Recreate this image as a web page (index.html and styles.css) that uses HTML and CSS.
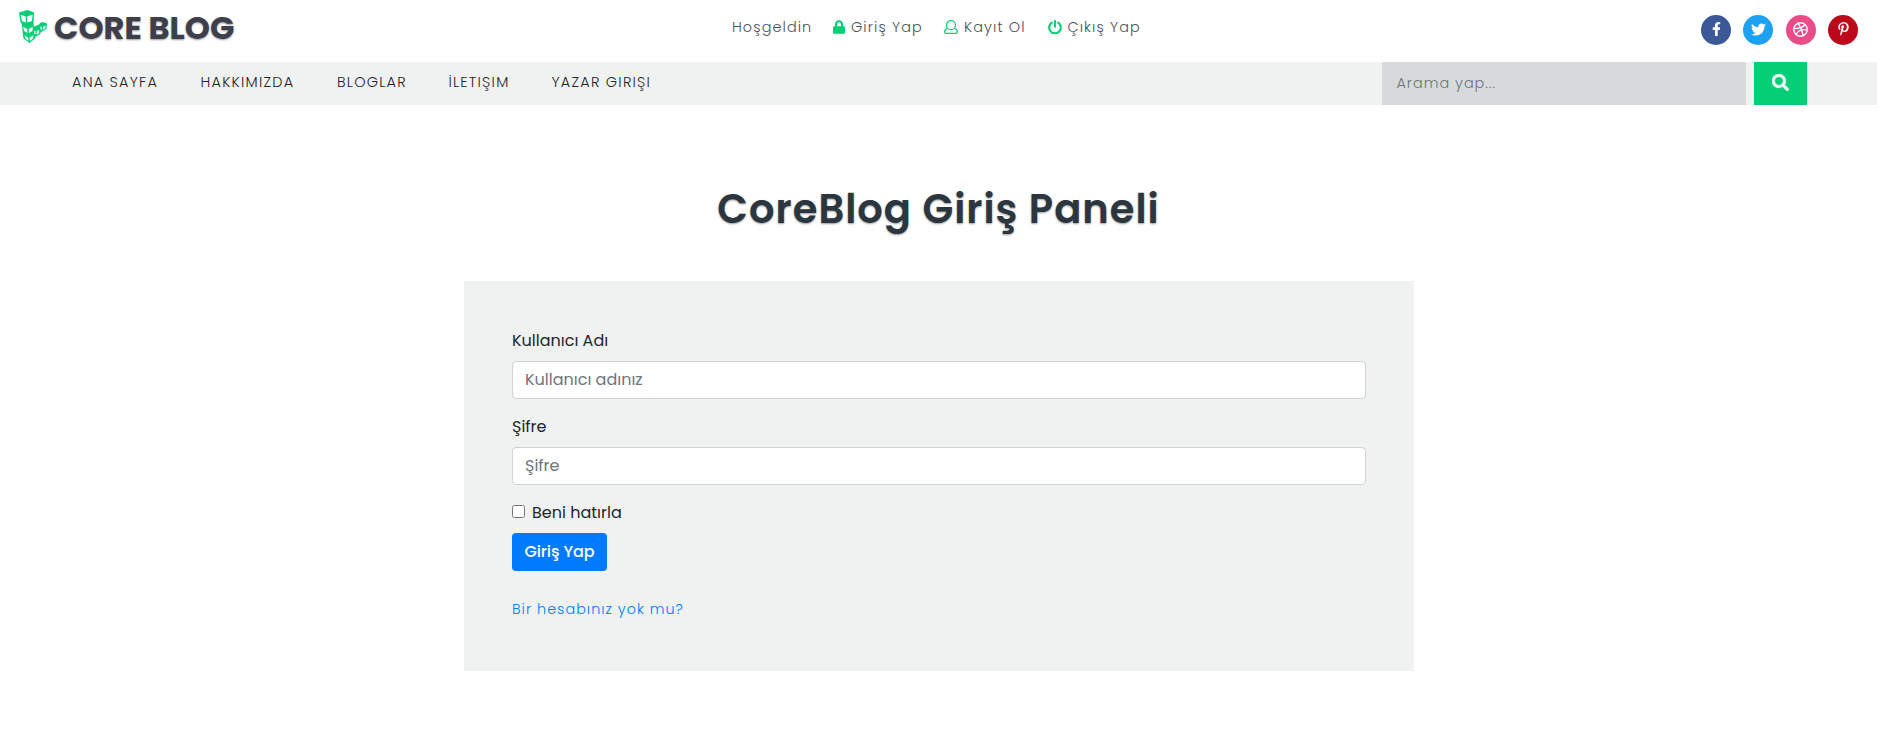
FILE: index.html
```html
<!DOCTYPE html>
<html lang="tr">
<head>
<meta charset="utf-8">
<title>CoreBlog Giriş Paneli</title>
<link rel="stylesheet" href="styles.css">
</head>
<body>
<header class="topbar">
  <a class="brand">
    <svg class="brand-mark" width="29" height="34" viewBox="0 0 29 34">
      <path fill="#04ce76" d="M0 2.500 8.500 0 15 2.500 14.500 12.500 15 17 16.500 16 20 14.500 21 13 24 12 28 13.500 27.500 19 22 22 21 24 16.500 27 15.500 29 10.500 33 4.500 28.500 3.500 21 3 14 1.500 12.500Z"/>
      <path fill="#fff" d="M1.600 4.800 6.700 6.400 7 12.500 3 11.200ZM8 6.400 13.600 4.600 13 11 8.300 12.500ZM4.200 17 8.200 19 8.500 23 5 21ZM9.700 19 13.700 17 13.500 21 9.900 23ZM5.500 25.500 9 27.500 9.600 31 6.200 28.200ZM10.500 27.500 14.500 25.200 14 28.500 11 31ZM15.400 20.500 16.700 21.300 16.500 24.500 15.300 24ZM17.900 21.300 20.300 20 19.800 23.300 17.600 24.700ZM21.500 16.300 22.900 17 22.700 20 21.500 19.500ZM24 17 26.700 15.600 26.200 18.500 23.900 19.700Z"/>
    </svg>
    <span class="brand-name">CORE BLOG</span>
  </a>
  <ul class="account">
    <li class="hello">Hoşgeldin</li>
    <li class="login"><svg width="12" height="14" viewBox="0 0 448 512"><path fill="currentColor" d="M400 224h-24v-72C376 68 308 0 224 0S72 68 72 152v72H48c-26 0-48 22-48 48v192c0 26 22 48 48 48h352c26 0 48-22 48-48V272c0-26-22-48-48-48zm-104 0H152v-72c0-40 32-72 72-72s72 32 72 72z"/></svg><span>Giriş Yap</span></li>
    <li class="register"><svg width="14" height="14" viewBox="0 0 14 14" fill="none" stroke="currentColor" stroke-width="1.200"><circle cx="7" cy="5.200" r="4.500"/><path d="M3.600 8.300C1.500 9 .6 10.200.6 11.900c0 .9.500 1.500 1.300 1.500h10.200c.8 0 1.300-.6 1.300-1.500 0-1.700-.9-2.900-3-3.600"/></svg><span>Kayıt Ol</span></li>
    <li class="logout"><svg width="14" height="14" viewBox="0 0 14 14" fill="none" stroke="currentColor" stroke-width="2.100" stroke-linecap="round"><path d="M3.800 2.700a5.800 5.800 0 1 0 6.400 0M7 1.100v5.600"/></svg><span>Çıkış Yap</span></li>
  </ul>
  <div class="social">
    <a class="facebook"><svg width="9" height="14" viewBox="0 0 320 512"><path fill="currentColor" d="M279 288l14-93h-89v-60c0-25 12-50 52-50h41V7s-37-7-72-7c-73 0-121 44-121 125v70H23v93h81v224h100V288z"/></svg></a>
    <a class="twitter"><svg width="15" height="15" viewBox="0 0 512 512"><path fill="currentColor" d="M459 152c.3 4.500.3 9 .3 13.600 0 138.700-105.600 298.600-298.600 298.600-59.500 0-114.700-17.200-161.100-47.100 8.400 1 16.600 1.300 25.300 1.300 49 0 94.200-16.600 130.300-44.800-46.100-1-84.800-31.200-98.100-72.800 6.500 1 13 1.600 19.800 1.600 9.400 0 18.800-1.300 27.600-3.600-48-9.700-84.100-52-84.100-103v-1.300c14 7.800 30.200 12.700 47.400 13.300-28.300-18.800-46.800-51-46.800-87.400 0-19.500 5.200-37.400 14.300-53 51.700 63.700 129.300 105.300 216.400 109.800-1.600-7.800-2.600-15.900-2.600-24 0-57.800 46.800-104.900 104.900-104.900 30.200 0 57.500 12.700 76.700 33.100 23.700-4.500 46.500-13.300 66.600-25.300-7.800 24.400-24.400 44.800-46.100 57.800 21.100-2.300 41.600-8.100 60.400-16.200-14.300 20.800-32.200 39.300-52.600 54.300z"/></svg></a>
    <a class="dribbble"><svg width="15" height="15" viewBox="0 0 14 14" fill="none" stroke="currentColor" stroke-width="1.250"><circle cx="7" cy="7" r="6.300"/><path d="M4.500 1.200C7 4.200 8.700 8 9.400 12.800M.8 6.200c4.500 0 8-.7 10.500-3.600M2.800 11.700C4.700 8.200 8.500 6.500 13.200 7.500"/></svg></a>
    <a class="pinterest"><svg width="11" height="14" viewBox="0 0 384 512"><path fill="currentColor" d="M204 6.500C101.400 6.500 0 74.900 0 185.600 0 256 39.600 296 63.600 296c9.900 0 15.600-27.600 15.600-35.400 0-9.300-23.700-29.100-23.700-67.800 0-80.400 61.200-137.400 140.400-137.400 68.100 0 118.500 38.700 118.500 109.800 0 53.100-21.300 152.700-90.300 152.700-24.900 0-46.200-18-46.200-43.800 0-37.800 26.400-74.400 26.400-113.400 0-66.200-93.900-54.200-93.900 25.800 0 16.800 2.100 35.400 9.600 50.700-13.800 59.400-42 147.900-42 209.100 0 18.900 2.700 37.500 4.500 56.400 3.400 3.800 1.700 3.400 6.900 1.500 50.400-69 48.600-82.500 71.400-172.800 12.300 23.400 44.100 36 69.300 36 106.200 0 153.900-103.500 153.900-196.800C384 71.300 298.200 6.500 204 6.500z"/></svg></a>
  </div>
</header>
<nav class="navbar">
  <div class="menu">
    <a class="m-home">ANA SAYFA</a><a class="m-about">HAKKIMIZDA</a><a class="m-blogs">BLOGLAR</a><a class="m-contact">İLETIŞIM</a><a class="m-author">YAZAR GIRIŞI</a>
  </div>
  <form class="search">
    <input type="search" placeholder="Arama yap...">
    <button type="button"><svg width="17" height="17" viewBox="0 0 512 512"><path fill="currentColor" stroke="currentColor" stroke-width="14" d="M505 442.700L405.300 343c-4.500-4.500-10.600-7-17-7H372c27.600-35.300 44-79.700 44-128C416 93.100 322.900 0 208 0S0 93.100 0 208s93.100 208 208 208c48.300 0 92.700-16.400 128-44v16.300c0 6.400 2.500 12.500 7 17l99.700 99.700c9.400 9.400 24.600 9.400 33.900 0l28.300-28.300c9.400-9.400 9.400-24.600.1-34zM208 336c-70.700 0-128-57.200-128-128 0-70.700 57.200-128 128-128 70.700 0 128 57.200 128 128 0 70.700-57.200 128-128 128z"/></svg></button>
  </form>
</nav>
<main>
  <h1>CoreBlog Giriş Paneli</h1>
  <form class="card">
    <label class="field-label name-label">Kullanıcı Adı</label>
    <input class="field name-field" type="text" placeholder="Kullanıcı adınız">
    <label class="field-label pass-label">Şifre</label>
    <input class="field pass-field" type="password" placeholder="Şifre">
    <label class="remember"><input type="checkbox"><span>Beni hatırla</span></label>
    <button class="submit" type="button">Giriş Yap</button>
    <a class="signup">Bir hesabınız yok mu?</a>
  </form>
</main>
</body>
</html>
```
FILE: styles.css
```css
* { box-sizing: border-box; }
body { margin: 0; background: #fff; font-family: Poppins, Inter, sans-serif; color: #212529; font-size: 16px; }
svg { display: block; flex: none; }
input, button { font-family: inherit; margin: 0; }

.topbar { display: flex; align-items: flex-start; justify-content: space-between; height: 62px; padding: 0 19px; }
.brand { display: flex; width: 713px; padding-top: 10px; gap: 6px; }
.brand-name { font-size: 32px; line-height: 36px; font-weight: 700; color: #3e3f4a; text-shadow: 0 1px 2px rgba(0,0,0,.4); white-space: nowrap; }
.account { display: flex; flex: 1; margin: 0; padding: 16px 0 0; list-style: none; font-size: 14.4px; line-height: 22px; font-weight: 300; color: #4a5157; white-space: nowrap; letter-spacing: 1.100px; }
.account li { display: flex; align-items: center; gap: 6px; }
.account svg { color: #04ce76; }
.hello { width: 101px; }
.login { width: 111px; }
.register { width: 103.500px; }
.social { display: flex; gap: 12.300px; padding-top: 15px; }
.social a { display: flex; align-items: center; justify-content: center; width: 30px; height: 30px; padding-bottom: 2px; border-radius: 50%; color: #fff; }
.facebook { background: #3b5998; }
.twitter { background: #1da1f2; }
.dribbble { background: #ea4c89; }
.pinterest { background: #bd081c; }

.navbar { display: flex; justify-content: space-between; height: 43px; padding: 0 70px 0 72px; background: #f0f2f1; }
.menu { display: flex; font-size: 14.4px; line-height: 40px; font-weight: 300; color: #212529; letter-spacing: 1.250px; white-space: nowrap; }
.m-home { width: 128.500px; }
.m-about { width: 136.500px; }
.m-blogs { width: 111.500px; }
.m-contact { width: 103px; }
.search { display: flex; gap: 8px; }
.search input { width: 364px; height: 43px; padding: 0 14.400px; border: 0; border-radius: 0; background: #d8d9db; font-size: 14.4px; font-weight: 300; letter-spacing: 1px; }
.search button { display: flex; justify-content: center; width: 53px; height: 43px; padding: 12px 0 0; border: 0; background: #04ce76; color: #fff; }
::placeholder { color: #6c757d; opacity: 1; }

main { display: flex; flex-direction: column; align-items: center; }
h1 { margin: 74px 0 42px; font-size: 40px; line-height: 60px; font-weight: 600; letter-spacing: 1px; color: #2c363e; text-shadow: 0 1px 2px rgba(0,0,0,.4); white-space: nowrap; }
.card { display: flex; flex-direction: column; align-items: flex-start; width: 950px; height: 390px; margin-left: 1px; padding: 48px; background: #f0f2f1; }
.field-label { height: 24px; margin-bottom: 8px; line-height: 24px; }
.field { width: 854px; height: 38px; margin-bottom: 16px; padding: 5px 12px 7px; border: 1px solid #ced4da; border-radius: 4px; background: #fff; font-size: 16px; }
.remember { display: flex; align-items: center; gap: 7px; height: 24px; margin-bottom: 8px; }
.remember input { width: 13px; height: 13px; margin-top: -3px; }
.remember span { margin-top: -2px; }
.submit { width: 95px; height: 38px; padding: 0 0 1px; border: 0; border-radius: 4px; background: #007bff; color: #fff; font-size: 16px; font-weight: 500; letter-spacing: -.1px; }
.signup { margin-top: 26px; font-size: 14.4px; line-height: 24px; font-weight: 300; letter-spacing: 1px; color: #007bff; }
```
